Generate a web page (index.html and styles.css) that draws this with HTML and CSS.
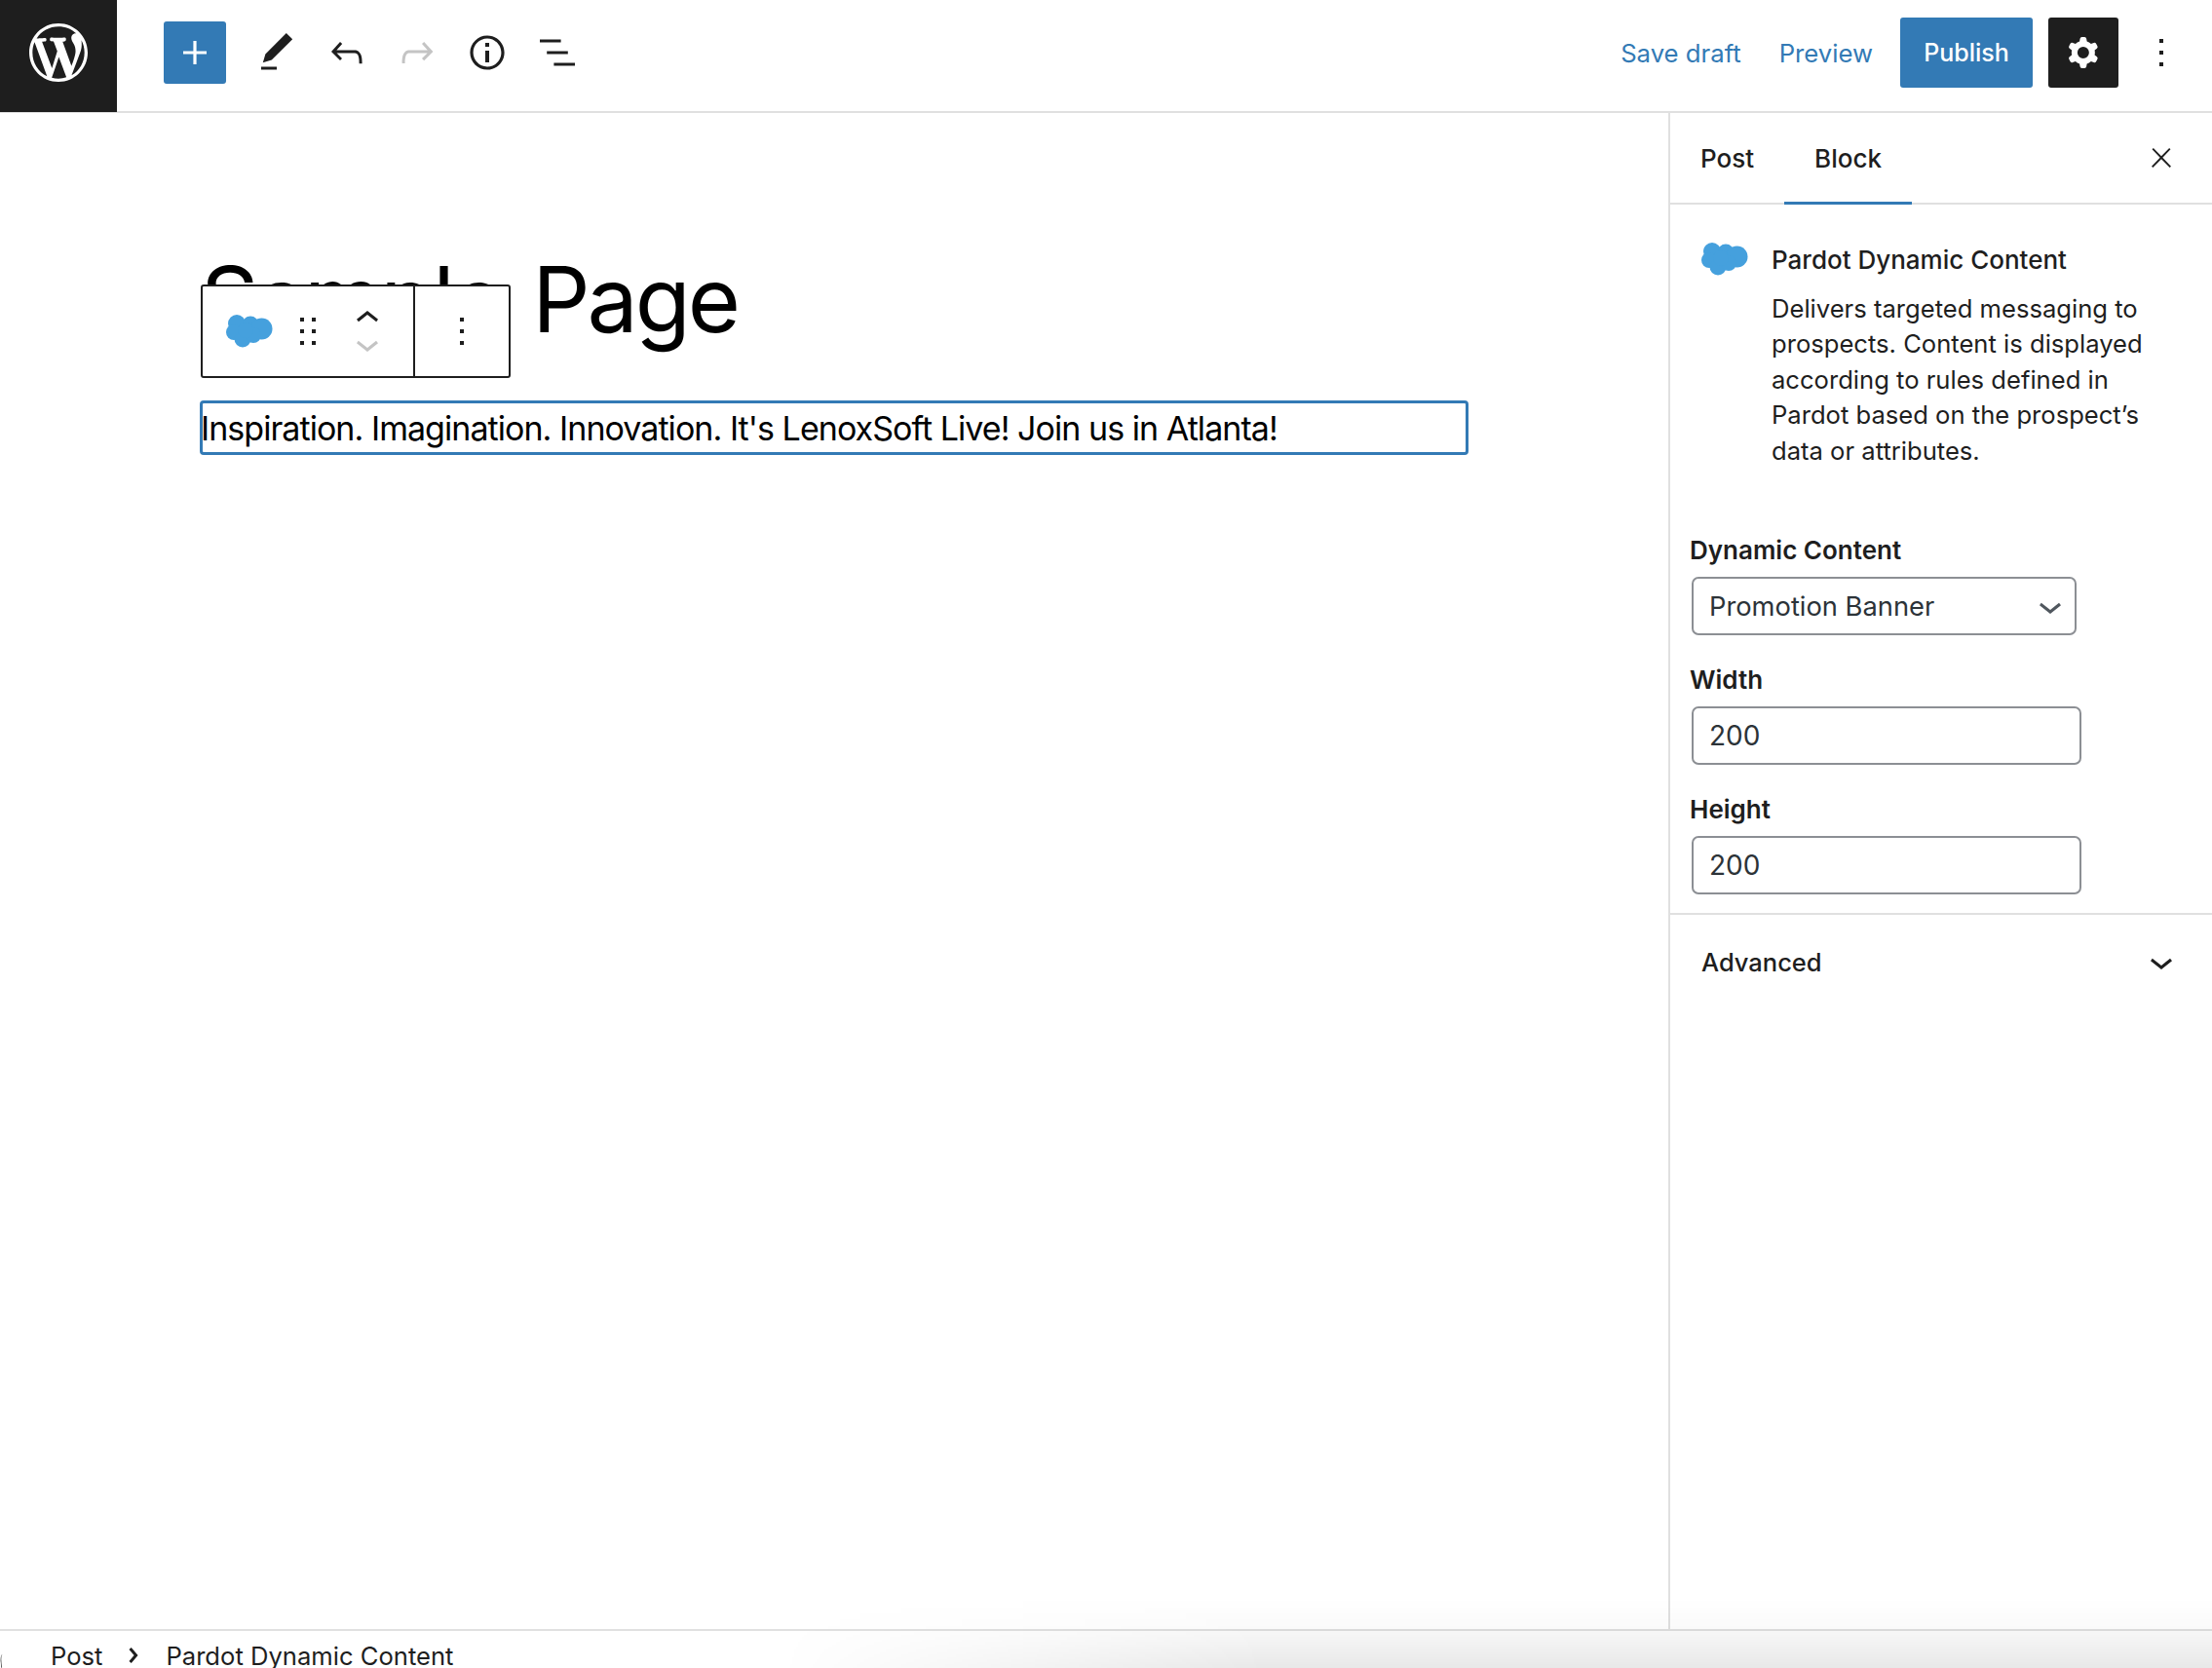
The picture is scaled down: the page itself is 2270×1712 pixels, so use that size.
FILE: index.html
```html
<!DOCTYPE html>
<html lang="en">
<head>
    <meta charset="UTF-8">
    <meta name="viewport" content="width=device-width, initial-scale=1.0">
    <title>Edit Page</title>
    <link rel="stylesheet" href="styles.css">
</head>
<body>
    <div class="app">
        <header class="topbar">
            <a class="wp-logo">
                <svg viewBox="0 0 20 20" width="60" height="60"><path fill="#fff" d="M20 10c0-5.51-4.49-10-10-10C4.48 0 0 4.49 0 10c0 5.52 4.48 10 10 10 5.51 0 10-4.48 10-10zM7.78 15.37L4.37 6.22c.55-.02 1.17-.08 1.17-.08.5-.06.44-1.13-.06-1.11 0 0-1.45.11-2.37.11-.18 0-.37 0-.58-.01C4.12 2.69 6.87 1.11 10 1.11c2.33 0 4.45.87 6.05 2.34-.68-.11-1.65.39-1.65 1.58 0 .74.45 1.36.9 2.1.35.61.55 1.36.55 2.46 0 1.49-1.4 5-1.4 5l-3.03-8.37c.54-.02.82-.17.82-.17.5-.05.44-1.25-.06-1.22 0 0-1.44.12-2.38.12-.87 0-2.33-.12-2.33-.12-.5-.03-.56 1.2-.06 1.22l.92.08 1.26 3.41zM17.41 10c.24-.64.74-1.87.43-4.25.7 1.29 1.05 2.71 1.05 4.25 0 3.29-1.73 6.24-4.4 7.78.97-2.59 1.94-5.2 2.92-7.78zM6.1 18.09C3.12 16.65 1.11 13.53 1.11 10c0-1.3.23-2.48.72-3.59C3.25 10.3 4.67 14.2 6.1 18.09zm4.03-6.63l2.58 6.98c-.86.29-1.76.45-2.71.45-.79 0-1.57-.11-2.29-.33.81-2.38 1.62-4.74 2.42-7.1z"/></svg>
            </a>
            <div class="tools">
                <button class="add-btn">
                    <svg viewBox="0 0 24 24" width="48" height="48"><path d="M18 11.2h-5.2V6h-1.6v5.2H6v1.6h5.2V18h1.6v-5.2H18z"/></svg>
                </button>
                <button class="icon-btn">
                    <svg viewBox="0 0 24 24" width="48" height="48"><path d="M20.1 5.1L16.9 2 6.2 12.7l-1.3 4.4 4.5-1.3L20.1 5.1zM4 20.8h8v-1.5H4v1.5z"/></svg>
                </button>
                <button class="icon-btn">
                    <svg viewBox="0 0 24 24" width="48" height="48"><path d="M18.3 11.7c-.6-.6-1.4-.9-2.3-.9H6.7l2.9-3.3-1.1-1-4.5 5L8.5 16l1-1-2.7-2.7H16c.5 0 .9.2 1.3.5 1 1 1 3.4 1 4.5v.3h1.5v-.2c0-1.5 0-4.3-1.5-5.7z"/></svg>
                </button>
                <button class="icon-btn disabled">
                    <svg viewBox="0 0 24 24" width="48" height="48"><path d="M15.6 6.5l-1.1 1 2.9 3.3H8c-.9 0-1.7.3-2.3.9-1.4 1.5-1.4 4.2-1.4 5.6v.2h1.5v-.3c0-1.1 0-3.5 1-4.5.3-.3.7-.5 1.3-.5h9.2L14.5 15l1.1 1.1 4.6-4.6-4.6-5z"/></svg>
                </button>
                <button class="icon-btn">
                    <svg viewBox="0 0 24 24" width="48" height="48"><path d="M12 3.2c-4.8 0-8.8 3.9-8.8 8.8 0 4.8 3.9 8.8 8.8 8.8 4.8 0 8.8-3.9 8.8-8.8 0-4.8-4-8.8-8.8-8.8zm0 16c-4 0-7.2-3.3-7.2-7.2C4.8 8 8 4.8 12 4.8s7.2 3.3 7.2 7.2c0 4-3.2 7.2-7.2 7.2zM11 17h2v-6h-2v6zm0-8h2V7h-2v2z"/></svg>
                </button>
                <button class="icon-btn">
                    <svg viewBox="0 0 24 24" width="48" height="48"><path d="M13.8 5.2H3v1.5h10.8V5.2zm-3.6 12v1.5H21v-1.5H10.2zm7.2-6H6.6v1.5h10.8v-1.5z"/></svg>
                </button>
            </div>
            <div class="actions">
                <a class="link-btn save">Save draft</a>
                <a class="link-btn preview">Preview</a>
                <button class="publish">Publish</button>
                <button class="settings">
                    <svg viewBox="0 0 24 24" width="48" height="48"><path fill="#fff" fill-rule="evenodd" clip-rule="evenodd" d="M10.289 4.836A1 1 0 0111.275 4h1.306a1 1 0 01.987.836l.244 1.466c.787.26 1.503.679 2.108 1.218l1.393-.522a1 1 0 011.216.437l.653 1.13a1 1 0 01-.23 1.273l-1.148.944a6.025 6.025 0 010 2.435l1.149.946a1 1 0 01.23 1.272l-.653 1.13a1 1 0 01-1.216.437l-1.394-.522c-.605.54-1.32.958-2.108 1.218l-.244 1.466a1 1 0 01-.987.836h-1.306a1 1 0 01-.986-.836l-.244-1.466a5.995 5.995 0 01-2.108-1.218l-1.394.522a1 1 0 01-1.217-.436l-.653-1.131a1 1 0 01.23-1.272l1.149-.946a6.026 6.026 0 010-2.435l-1.148-.944a1 1 0 01-.23-1.272l.653-1.131a1 1 0 011.217-.437l1.393.522a5.994 5.994 0 012.108-1.218l.244-1.466zM14.929 12a3 3 0 11-6 0 3 3 0 016 0z"/></svg>
                </button>
                <button class="icon-btn more">
                    <svg viewBox="0 0 24 24" width="48" height="48"><path d="M13 19h-2v-2h2v2zm0-6h-2v-2h2v2zm0-6h-2V5h2v2z"/></svg>
                </button>
            </div>
        </header>

        <div class="main">
            <main class="editor">
                <h1 class="post-title">Sample Page</h1>
                <div class="block-toolbar">
                    <div class="toolbar-group first">
                        <svg class="cloud" viewBox="0 0 48 34" width="48" height="34"><g fill="#45a0dd"><circle cx="11" cy="9" r="9"/><circle cx="25" cy="10" r="8.5"/><circle cx="36.500" cy="14.500" r="11"/><circle cx="8" cy="18" r="8"/><circle cx="17" cy="25" r="8.500"/><circle cx="28" cy="21" r="8"/><circle cx="20" cy="16" r="8"/></g></svg>
                        <svg class="drag" viewBox="0 0 24 24" width="48" height="48"><path d="M8 7h2V5H8v2zm0 6h2v-2H8v2zm0 6h2v-2H8v2zm6-14v2h2V5h-2zm0 8h2v-2h-2v2zm0 6h2v-2h-2v2z"/></svg>
                        <div class="movers">
                            <svg viewBox="0 0 24 12" width="48" height="24"><path d="M6.500 8.400L12 4l5.500 4.400-.9 1.200L12 6 7.500 9.600l-1-1.200z"/></svg>
                            <svg class="disabled" viewBox="0 0 24 12" width="48" height="24"><path d="M17.500 3.600L12 8 6.500 3.600l.9-1.200L12 6l4.500-3.600 1 1.200z"/></svg>
                        </div>
                    </div>
                    <div class="toolbar-group last">
                        <svg viewBox="0 0 24 24" width="48" height="48"><path d="M13 19h-2v-2h2v2zm0-6h-2v-2h2v2zm0-6h-2V5h2v2z"/></svg>
                    </div>
                </div>
                <div class="selected-block">Inspiration. Imagination. Innovation. It's LenoxSoft Live! Join us in Atlanta!</div>
            </main>

            <aside class="sidebar">
                <div class="tabs">
                    <div class="tab">Post</div>
                    <div class="tab active">Block</div>
                    <button class="icon-btn close">
                        <svg viewBox="0 0 24 24" width="32" height="32"><path d="M13 11.800l6.100-6.300-1-1-6.100 6.200-6.100-6.200-1 1 6.100 6.300-6.500 6.700 1 1 6.500-6.600 6.500 6.600 1-1z"/></svg>
                    </button>
                </div>
                <div class="block-card">
                    <svg class="cloud" viewBox="0 0 48 34" width="48" height="34"><g fill="#45a0dd"><circle cx="11" cy="9" r="9"/><circle cx="25" cy="10" r="8.5"/><circle cx="36.500" cy="14.500" r="11"/><circle cx="8" cy="18" r="8"/><circle cx="17" cy="25" r="8.500"/><circle cx="28" cy="21" r="8"/><circle cx="20" cy="16" r="8"/></g></svg>
                    <div class="card-text">
                        <h2>Pardot Dynamic Content</h2>
                        <p>Delivers targeted messaging to prospects. Content is displayed according to rules defined in Pardot based on the prospect’s data or attributes.</p>
                    </div>
                </div>
                <div class="settings-panel">
                    <div class="field">
                        <label>Dynamic Content</label>
                        <div class="select-box">
                            <span>Promotion Banner</span>
                            <svg viewBox="0 0 24 24" width="48" height="48"><path d="M17.500 11.600L12 16l-5.500-4.400.9-1.200L12 14l4.500-3.600 1 1.200z"/></svg>
                        </div>
                    </div>
                    <div class="field">
                        <label>Width</label>
                        <input class="text-input" type="text" value="200">
                    </div>
                    <div class="field">
                        <label>Height</label>
                        <input class="text-input" type="text" value="200">
                    </div>
                </div>
                <div class="advanced">
                    <span>Advanced</span>
                    <svg viewBox="0 0 24 24" width="48" height="48"><path d="M17.500 11.600L12 16l-5.500-4.400.9-1.200L12 14l4.500-3.600 1 1.200z"/></svg>
                </div>
            </aside>
        </div>

        <footer class="breadcrumbs">
            <span>Post</span>
            <svg viewBox="0 0 24 24" width="48" height="48"><path d="M10.862 8.040l3.419 3.989-3.419 3.988-1.139-.976 2.582-3.012-2.582-3.012 1.139-.977z"/></svg>
            <span>Pardot Dynamic Content</span>
        </footer>
        <div class="bottom-shade"></div>
    </div>
</body>
</html>
```

FILE: styles.css
```css
* {
    box-sizing: border-box;
}
html, body {
    height: 100%;
}
body {
    margin: 0;
    font-family: Inter, "Noto Sans", sans-serif;
    font-size: 26px;
    color: #1e1e1e;
    background: #fff;
    overflow: hidden;
}
button {
    font-family: inherit;
    border: 0;
    background: none;
    padding: 0;
}
svg {
    display: block;
    fill: currentColor;
    flex-shrink: 0;
}
.app {
    position: relative;
    display: flex;
    flex-direction: column;
    height: 1712px;
}

/* top bar */
.topbar {
    display: flex;
    align-items: center;
    height: 116px;
    border-bottom: 2px solid #e0e0e0;
    flex-shrink: 0;
}
.wp-logo {
    display: flex;
    align-items: center;
    justify-content: center;
    align-self: flex-start;
    width: 120px;
    height: 115px;
    padding-bottom: 7px;
    background: #1e1e1e;
}
.tools {
    display: flex;
    align-items: center;
    margin-left: 48px;
    margin-top: -6px;
}
.add-btn {
    display: flex;
    align-items: center;
    justify-content: center;
    width: 64px;
    height: 64px;
    margin-right: 16px;
    background: #337ab5;
    color: #fff;
    border-radius: 3px;
}
.icon-btn {
    display: flex;
    align-items: center;
    justify-content: center;
    width: 72px;
    height: 72px;
    color: #1e1e1e;
}
.disabled {
    color: #c4c4c4;
}
.actions {
    display: flex;
    align-items: center;
    margin-left: auto;
    margin-top: -6px;
    padding-right: 16px;
}
.link-btn {
    color: #337ab5;
    font-size: 25.7px;
}
.save {
    margin-right: 39px;
}
.preview {
    margin-right: 28px;
}
.publish {
    height: 72px;
    width: 136px;
    background: #337ab5;
    color: #fff;
    font-size: 25px;
    font-weight: 500;
    border-radius: 3px;
}
.settings {
    display: flex;
    align-items: center;
    justify-content: center;
    width: 72px;
    height: 72px;
    margin-left: 16px;
    margin-right: 8px;
    background: #1e1e1e;
    border-radius: 3px;
}

/* layout */
.main {
    display: flex;
    flex: 1;
    min-height: 0;
}
.editor {
    position: relative;
    flex: 1;
    padding: 133px 0 0 205px;
}
.post-title {
    margin: 0 0 0 1px;
    font-size: 93px;
    line-height: 117px;
    font-weight: 400;
    letter-spacing: -3px;
    word-spacing: 8px;
    color: #000;
}
.selected-block {
    width: 1302px;
    height: 56px;
    margin-top: 45px;
    border: 3px solid #337ab5;
    border-radius: 4px;
    color: #000;
    font-size: 34px;
    line-height: 52px;
    letter-spacing: -0.95px;
    text-indent: -2px;
}

/* floating block toolbar */
.block-toolbar {
    position: absolute;
    left: 206px;
    top: 176px;
    display: flex;
    width: 318px;
    height: 96px;
    background: #fff;
    border: 2px solid #1e1e1e;
    border-radius: 3px;
}
.toolbar-group {
    display: flex;
    align-items: center;
}
.toolbar-group.first {
    width: 218px;
    padding-left: 24px;
    border-right: 2px solid #1e1e1e;
}
.toolbar-group.last {
    flex: 1;
    justify-content: center;
}
.drag {
    margin-left: 12px;
}
.movers {
    margin-left: 13px;
}
.movers svg:first-child {
    margin-bottom: 10px;
}

/* sidebar */
.sidebar {
    width: 558px;
    border-left: 2px solid #e0e0e0;
    flex-shrink: 0;
}
.tabs {
    display: flex;
    align-items: stretch;
    height: 94px;
    border-bottom: 2px solid #e0e0e0;
}
.tab {
    display: flex;
    align-items: center;
    padding: 2px 31px 0;
    margin-bottom: -2px;
    font-weight: 500;
    border-bottom: 3px solid transparent;
}
.tab.active {
    border-bottom-color: #337ab5;
}
.close {
    margin-left: auto;
    margin-right: 16px;
    align-self: center;
}
.block-card {
    display: flex;
    padding: 39px 0 0 32px;
}
.card-text {
    width: 395px;
    margin-left: 24px;
}
.card-text h2 {
    margin: 0 0 14px;
    font-size: 26px;
    line-height: 36px;
    font-weight: 500;
}
.card-text p {
    margin: 0;
    font-size: 25.6px;
    line-height: 36.4px;
}
.settings-panel {
    padding: 66px 20px 0;
}
.field {
    margin-bottom: 28px;
}
.field:last-child {
    margin-bottom: 19px;
}
.field label {
    display: block;
    font-size: 26px;
    line-height: 36px;
    font-weight: 600;
    margin-bottom: 9px;
}
.select-box {
    display: flex;
    align-items: center;
    justify-content: space-between;
    width: 395px;
    height: 60px;
    margin-left: 2px;
    padding: 0 1px 0 16px;
    border: 2px solid #8c8f94;
    border-radius: 7px;
    color: #2c3338;
    font-size: 27.3px;
}
.select-box svg {
    color: #50575e;
}
.text-input {
    display: block;
    width: 400px;
    height: 60px;
    margin-left: 2px;
    padding: 0 16px;
    border: 2px solid #8c8f94;
    border-radius: 7px;
    color: #2c3338;
    font-family: inherit;
    font-size: 28px;
}
.advanced {
    display: flex;
    align-items: center;
    justify-content: space-between;
    height: 98px;
    padding: 0 28px 0 32px;
    border-top: 2px solid #e0e0e0;
    font-size: 25.5px;
    font-weight: 500;
}

/* breadcrumbs */
.breadcrumbs {
    position: relative;
    display: flex;
    align-items: center;
    height: 40px;
    padding: 12px 0 0 52px;
    border-top: 2px solid #e0e0e0;
    flex-shrink: 0;
    color: #1e1e1e;
    font-size: 25.6px;
}
.breadcrumbs svg {
    margin: 0 9px 0 8px;
}
.breadcrumbs::before {
    content: "";
    position: absolute;
    left: 0;
    bottom: 0;
    width: 4px;
    height: 14px;
    border-left: 1px solid #555;
    border-radius: 4px 0 0 0 / 14px 0 0 0;
    transform: skewX(10deg);
}
.bottom-shade {
    position: absolute;
    left: 800px;
    right: 0;
    bottom: 0;
    height: 72px;
    background: linear-gradient(to bottom, rgba(0, 0, 0, 0), rgba(0, 0, 0, 0.02) 32px, rgba(0, 0, 0, 0.03) 34px, rgba(0, 0, 0, 0.09));
    -webkit-mask-image: linear-gradient(to right, transparent, #000 500px);
    mask-image: linear-gradient(to right, transparent, #000 500px);
    pointer-events: none;
}
```
